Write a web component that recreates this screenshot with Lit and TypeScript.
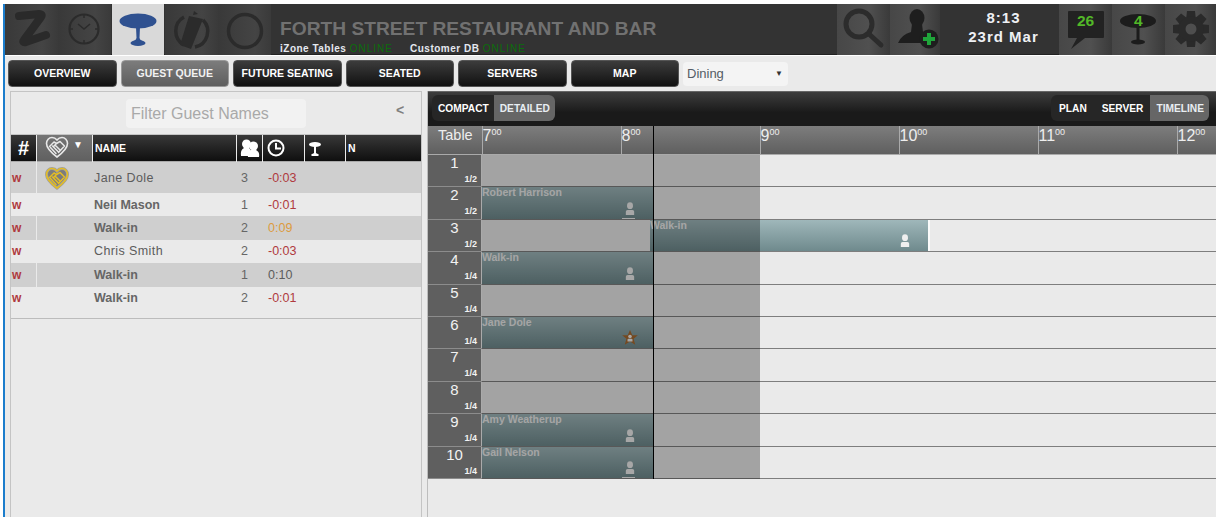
import { LitElement, html, svg, css, nothing } from "lit";
import { customElement } from "lit/decorators.js";

const NAV = ["OVERVIEW", "GUEST QUEUE", "FUTURE SEATING", "SEATED", "SERVERS", "MAP"];

const QUEUE = [
  { name: "Jane Dole", size: 3, wait: "-0:03", tone: "late", vip: true, dark: true },
  { name: "Neil Mason", size: 1, wait: "-0:01", tone: "late", bold: true },
  { name: "Walk-in", size: 2, wait: "0:09", tone: "warn", dark: true, bold: true },
  { name: "Chris Smith", size: 2, wait: "-0:03", tone: "late" },
  { name: "Walk-in", size: 1, wait: "0:10", tone: "", dark: true, bold: true },
  { name: "Walk-in", size: 2, wait: "-0:01", tone: "late", bold: true },
];

type Booking = { name: string; long?: boolean; star?: boolean; tail?: boolean };

const TABLES: { seats: string; booking?: Booking }[] = [
  { seats: "1/2" },
  { seats: "1/2", booking: { name: "Robert Harrison", tail: true } },
  { seats: "1/2", booking: { name: "Walk-in", long: true } },
  { seats: "1/4", booking: { name: "Walk-in" } },
  { seats: "1/4" },
  { seats: "1/4", booking: { name: "Jane Dole", star: true } },
  { seats: "1/4" },
  { seats: "1/4" },
  { seats: "1/4", booking: { name: "Amy Weatherup" } },
  { seats: "1/4", booking: { name: "Gail Nelson", tail: true } },
];

const HOURS = [7, 8, 9, 10, 11, 12];

const person = svg`<circle cx="6" cy="4" r="3.6"/><path d="M1 10.5Q1 8.5 3 8.5H9Q11 8.5 11 10.5V14H1Z"/>`;

const HEART_D =
  "M12 21C6 16.5 1.5 12.5 1.5 7.5C1.5 4 4 1.5 7 1.5C9 1.5 10.8 2.5 12 4C13.2 2.5 15 1.5 17 1.5C20 1.5 22.5 4 22.5 7.5C22.5 12.5 18 16.5 12 21Z";

const hands = (stroke: string) => svg`
  <path d="M4.5 10.5L9 6L11.5 7.5L15 5.5L19.5 10L13.5 16.5M5.5 11.5L11 17.5M7.5 10L13 15.5M10 9L15 14M11.5 7.5L8.5 10.5" fill="none" stroke=${stroke} stroke-width="1.5" stroke-linecap="round" stroke-linejoin="round"/>`;

const gearTeeth = [0, 45, 90, 135, 180, 225, 270, 315];

@customElement("app-root")
export class AppRoot extends LitElement {
  static styles = css`
    :host {
      display: block;
      width: 1216px;
      height: 520px;
      box-sizing: border-box;
      padding: 4px 0 3px 3px;
      background: #fff;
      font-family: "Liberation Sans", Arial, sans-serif;
      overflow: hidden;
    }

    .page {
      height: 513px;
      border-left: 2px solid #1b7dcc;
      background: #eaeaea;
      display: flex;
      flex-direction: column;
      overflow: hidden;
    }

    /* top bar */
    .topbar {
      flex: none;
      height: 51px;
      display: flex;
      background: #333;
      border-bottom: 1px solid #fff;
      box-shadow: inset 0 -1px 0 #222;
    }

    .tab {
      flex: none;
      width: 53px;
      position: relative;
      background: linear-gradient(90deg, #393939, #444 70%, #3a3a3a);
    }

    .tab svg {
      display: block;
    }

    .tab.active {
      background: #d9d9d9;
      width: 52px;
      margin: 0 1px 0 1px;
    }

    .tab.right {
      background: linear-gradient(90deg, #474747, #505050 60%, #3a3a3a);
    }

    .titles {
      flex: 1;
      padding: 13px 0 0 9px;
      min-width: 0;
    }

    .title {
      font-size: 19.2px;
      line-height: 24px;
      font-weight: bold;
      color: #717171;
      white-space: nowrap;
    }

    .status {
      display: flex;
      margin-top: 2px;
      font-size: 10px;
      line-height: 12px;
      font-weight: bold;
      color: #e4e8ef;
      letter-spacing: 0.5px;
      white-space: nowrap;
    }

    .status span {
      width: 130px;
    }

    .status b {
      font-weight: normal;
      color: #0b6f0b;
      letter-spacing: 1px;
    }

    .clock {
      flex: none;
      width: 119px;
      box-sizing: border-box;
      padding: 4px 0 0 8px;
      text-align: center;
      font-size: 15px;
      line-height: 19px;
      font-weight: bold;
      letter-spacing: 1px;
      color: #eef0f4;
    }

    .count {
      position: absolute;
      top: 8px;
      font-size: 15.5px;
      font-weight: bold;
      color: #52b828;
    }

    /* nav row */
    .nav {
      flex: none;
      height: 34px;
      display: flex;
      gap: 4px;
      padding: 4px 0 0 3px;
      box-sizing: border-box;
    }

    .nav button {
      flex: none;
      width: 108.5px;
      height: 27px;
      padding: 0 0 2px;
      border: 1px solid #555;
      border-radius: 4px;
      background: linear-gradient(#3c3c3c, #111);
      color: #fff;
      font: bold 10.5px "Liberation Sans", Arial, sans-serif;
    }

    .nav button.active {
      background: linear-gradient(#7c7c7c, #5e5e5e);
      border-color: #999;
      color: #f2f2f2;
    }

    .select {
      flex: none;
      width: 105px;
      height: 24px;
      margin-top: 2px;
      box-sizing: border-box;
      padding: 0 5px 2px 4px;
      display: flex;
      align-items: center;
      justify-content: space-between;
      background: #f4f4f4;
      border-radius: 4px;
      font-size: 13px;
      color: #555c66;
    }

    .select i {
      font-style: normal;
      font-size: 8px;
      color: #333;
    }

    /* main */
    .main {
      flex: 1;
      display: flex;
      min-height: 0;
      gap: 5px;
      padding-left: 5px;
    }

    .queue {
      flex: none;
      width: 410px;
      border: 1px solid #c4c4c4;
      border-bottom: none;
      box-sizing: content-box;
      margin-top: 1px;
    }

    .filter {
      height: 43px;
      display: flex;
      align-items: flex-start;
      position: relative;
      padding: 7px 0 0 115px;
      box-sizing: border-box;
      border-bottom: 1px solid #c4c4c4;
    }

    .filter div {
      width: 180px;
      height: 29px;
      box-sizing: border-box;
      padding-left: 5px;
      background: #f2f2f2;
      border-radius: 4px;
      font-size: 16px;
      line-height: 29px;
      color: #a9a9a9;
    }

    .filter span {
      position: absolute;
      left: 385px;
      top: 10px;
      font-size: 14px;
      font-weight: bold;
      color: #7f7f7f;
    }

    .qgrid {
      display: grid;
      grid-template-columns: 26px 56px 144px 26px 42px 41px 1fr;
    }

    .qh {
      height: 26px;
      margin-right: 1px;
      background: linear-gradient(#383838, #0f0f0f);
      color: #fff;
      font-size: 10px;
      font-weight: bold;
      display: flex;
      align-items: center;
      justify-content: center;
      border-bottom: 1px solid #aaa;
    }

    .qh.last {
      margin-right: 0;
    }

    .qh.heart {
      background: linear-gradient(#757575, #606060);
      justify-content: flex-start;
      padding-left: 8px;
      gap: 4px;
      align-items: flex-start;
      padding-top: 1px;
      height: 25px;
    }

    .qh.heart i {
      font-style: normal;
      font-size: 10px;
      margin-top: 3px;
    }

    .qh.text {
      justify-content: flex-start;
      padding-left: 2px;
      font-size: 10.5px;
    }

    .qh.hash {
      font-size: 20px;
    }

    .qh.icon-left {
      justify-content: flex-start;
      padding-left: 4px;
    }

    .qrow {
      display: contents;
    }

    .qrow > div {
      height: 23.4px;
      display: flex;
      align-items: center;
      font-size: 12.5px;
      color: #5c5c5c;
      background: #eaeaea;
    }

    .qrow.dark > div {
      background: #cfcfcf;
    }

    .qrow.tall > div {
      height: 31px;
    }

    .qrow .w {
      padding-left: 1px;
      font-weight: bold;
      color: #b03a3e;
      font-size: 12px;
      border-right: 1px solid #eaeaea;
    }

    .qrow .vip {
      padding-left: 7px;
    }

    .qrow .name {
      padding-left: 1px;
      letter-spacing: 0.4px;
    }

    .qrow.bold .name {
      font-weight: bold;
      letter-spacing: 0;
      color: #666;
    }

    .qrow .size {
      padding-left: 4px;
      color: #666;
    }

    .qrow .wait {
      padding-left: 5px;
    }

    .late {
      color: #b03a3e !important;
    }

    .warn {
      color: #dc9b40 !important;
    }

    .qend {
      grid-column: 1 / -1;
      height: 8px;
      border-bottom: 1px solid #bcbcbc;
    }

    /* timeline */
    .plan {
      flex: 1;
      min-width: 0;
      border-left: 1px solid #bdbdbd;
      margin-top: 1px;
    }

    .planbar {
      height: 35px;
      box-sizing: border-box;
      display: flex;
      justify-content: space-between;
      padding: 3px 7px 0 4px;
      background: linear-gradient(#3d3d3d, #1a1a1a 60%);
      border-top: 1px solid #666;
    }

    .seg {
      display: flex;
      height: 26px;
      border-radius: 6px;
      overflow: hidden;
      background: #262626;
      font-size: 10.2px;
      font-weight: bold;
      color: #fff;
    }

    .seg span {
      padding: 0 5px 0 6px;
      line-height: 28px;
    }

    .seg span.wide {
      padding: 0 7px 0 8px;
    }

    .seg span.on {
      background: #666;
      color: #e8edf2;
    }

    .chart {
      position: relative;
    }

    .hours {
      display: flex;
      height: 29px;
      background: linear-gradient(#7d7d7d, #5f5f5f);
      border-bottom: 1px solid #aaa;
      color: #eee;
      box-sizing: border-box;
    }

    .hours .lbl {
      flex: none;
      width: 53.5px;
      padding: 0 0 0 10px;
      box-sizing: border-box;
      font-size: 14.5px;
      line-height: 18px;
    }

    .hours .hr {
      flex: none;
      width: 139px;
      box-sizing: border-box;
      padding-top: 1px;
      border-left: 1px solid #aaa;
      font-size: 16px;
      line-height: 18px;
      white-space: nowrap;
    }

    .hours sup {
      font-size: 9px;
      line-height: 0;
      vertical-align: 6px;
    }

    .trow {
      display: flex;
      height: 32.4px;
      box-sizing: border-box;
    }

    .tnum {
      flex: none;
      width: 53px;
      background: #5f5f5f;
      border-bottom: 1px solid #8c8c8c;
      box-sizing: border-box;
      display: flex;
      flex-direction: column;
      color: #f2f2f2;
    }

    .tnum b {
      font-weight: normal;
      text-align: center;
      font-size: 15px;
      line-height: 16px;
    }

    .tnum i {
      font-style: normal;
      font-weight: bold;
      font-size: 9px;
      line-height: 11px;
      text-align: right;
      padding-right: 4px;
      padding-top: 3px;
    }

    .lane {
      flex: 1;
      position: relative;
      background: #eaeaea;
      border-left: 1px solid #f4f4f4;
      border-bottom: 1px solid #7e7e7e;
    }

    .booking {
      position: absolute;
      left: 0;
      top: 0;
      bottom: 0;
      width: 171px;
      background: linear-gradient(#9fb7ba, #6f8a8d);
      color: #ededed;
      font-size: 10.5px;
      font-weight: bold;
      line-height: 10px;
      padding: 0;
      box-sizing: border-box;
    }

    .booking.long {
      left: 168px;
      width: 280px;
      border-right: 2px solid #fbfbfb;
    }

    .booking svg {
      position: absolute;
      right: 18px;
      bottom: 4px;
      fill: #efefef;
    }

    .booking svg.star {
      fill: #a8692e;
      right: 15px;
      bottom: 3px;
    }

    .booking svg.small {
      right: 20px;
      bottom: 6px;
    }

    .tail {
      position: absolute;
      right: 18px;
      bottom: 0;
      width: 13px;
      height: 1px;
      background: #efefef;
    }

    .shade {
      position: absolute;
      left: 53px;
      top: 0;
      bottom: 0;
      width: 279px;
      background: rgba(0, 0, 0, 0.3);
      pointer-events: none;
    }

    .now {
      position: absolute;
      left: 225px;
      top: 0;
      bottom: 0;
      width: 1px;
      background: #000;
    }

    .shade-wrap {
      position: absolute;
      left: 0;
      right: 0;
      top: 29px;
      bottom: 0;
    }
  `;

  private renderBooking(b: Booking) {
    return html`<div class="booking ${b.long ? "long" : ""}">
      ${b.name}
      ${b.star
        ? html`<svg class="star" width="16" height="15" viewBox="0 0 24 23"><path d="M12 0L15.5 8H24L17.5 13.5L20 22.5L12 17.5L4 22.5L6.5 13.5L0 8H8.5Z"/></svg>
            <svg class="small" width="6" height="8" viewBox="0 0 12 14">${person}</svg>`
        : html`<svg width="10" height="13" viewBox="0 0 12 14" preserveAspectRatio="none">${person}</svg>`}
      ${b.tail ? html`<div class="tail"></div>` : nothing}
    </div>`;
  }

  render() {
    return html`
      <div class="page">
        <div class="topbar">
          <div class="tab">
            <svg width="53" height="50" viewBox="0 0 53 50"><path d="M14 12L34 10Q38 10 36 13L19 36Q17 39 21 38L41 31" fill="none" stroke="#2a2a2a" stroke-width="8" stroke-linecap="round" stroke-linejoin="round"/></svg>
          </div>
          <div class="tab">
            <svg width="53" height="50" viewBox="0 0 53 50" fill="none" stroke="#2b2b2b"><circle cx="26" cy="25" r="14.5" stroke-width="2.2"/><path d="M20 20L26 25L32 20M26 11V14M26 36V39M12 25H15M37 25H40" stroke-width="1.5"/></svg>
          </div>
          <div class="tab active">
            <svg width="52" height="50" viewBox="0 0 52 50" fill="#2f5190"><ellipse cx="26" cy="17" rx="18.5" ry="7.5"/><path d="M24 23H28L27.5 34Q28 36 30 37H22Q24 36 24.5 34Z"/><ellipse cx="26" cy="39" rx="7.5" ry="3"/></svg>
          </div>
          <div class="tab">
            <svg width="53" height="50" viewBox="0 0 53 50" fill="#2b2b2b"><path d="M19 13A16 16 0 0 0 19 41M38 16A16 16 0 0 1 30 43" fill="none" stroke="#2b2b2b" stroke-width="3.5"/><path d="M24 12L38 15L26 45L15 41Z"/><path d="M29 7L33 10L28 11Z"/></svg>
          </div>
          <div class="tab">
            <svg width="53" height="50" viewBox="0 0 53 50"><circle cx="27" cy="27" r="16.5" fill="none" stroke="#2b2b2b" stroke-width="3.5"/></svg>
          </div>
          <div class="titles">
            <div class="title">FORTH STREET RESTAURANT AND BAR</div>
            <div class="status"><span>iZone Tables <b>ONLINE</b></span><span>Customer DB <b>ONLINE</b></span></div>
          </div>
          <div class="tab right">
            <svg width="53" height="50" viewBox="0 0 53 50" fill="none" stroke="#2c2c2c"><circle cx="22" cy="20" r="13" stroke-width="5"/><path d="M32 30L44 41" stroke-width="5" stroke-linecap="round"/></svg>
          </div>
          <div class="tab right" style="width:50px">
            <svg width="50" height="50" viewBox="0 0 50 50" fill="#1e1e1e"><ellipse cx="27" cy="14" rx="7.5" ry="9"/><path d="M22 20H32L33 28Q35 30 36 32L34 39H8Q11 31 21 28Z"/><circle cx="39" cy="35" r="9.5"/><path d="M37 29H41V33H45V37H41V41H37V37H33V33H37Z" fill="#1fa53a"/></svg>
          </div>
          <div class="clock">8:13<br />23rd Mar</div>
          <div class="tab right">
            <svg width="53" height="50" viewBox="0 0 53 50"><path d="M10 7H44Q45 7 45 8V33Q45 34 44 34H26L12 45L18 34H10Q9 34 9 33V8Q9 7 10 7Z" fill="#222"/></svg>
            <span class="count" style="left:18px">26</span>
          </div>
          <div class="tab right">
            <svg width="53" height="50" viewBox="0 0 53 50" fill="#1c1c1c"><ellipse cx="26" cy="17" rx="18" ry="7"/><path d="M24.5 22H27.5V36H24.5Z"/><ellipse cx="26" cy="38" rx="7" ry="2.5"/></svg>
            <span class="count" style="left:22px">4</span>
          </div>
          <div class="tab right" style="width:51px">
            <svg width="51" height="50" viewBox="0 0 51 50" fill="#2a2a2a">
              ${gearTeeth.map((a) => svg`<path d="M22 7H30L31 16H21Z" transform="rotate(${a} 26 25)"/>`)}
              <circle cx="26" cy="25" r="12.5"/><circle cx="26" cy="25" r="5.5" fill="#4e4e4e"/>
            </svg>
          </div>
        </div>

        <div class="nav">
          ${NAV.map((n) => html`<button class=${n === "GUEST QUEUE" ? "active" : ""}>${n}</button>`)}
          <div class="select">Dining <i>▼</i></div>
        </div>

        <div class="main">
          <div class="queue">
            <div class="filter"><div>Filter Guest Names</div><span>&lt;</span></div>
            <div class="qgrid">
              <div class="qh hash">#</div>
              <div class="qh heart"><svg width="24" height="22" viewBox="0 0 24 22"><path d=${HEART_D} fill="none" stroke="#e8e8e8" stroke-width="1.6"/>${hands("#e8e8e8")}</svg><i>▼</i></div>
              <div class="qh text">NAME</div>
              <div class="qh">
                <svg width="20" height="18" viewBox="0 0 20 18" fill="#fff"><circle cx="6.5" cy="5" r="4.5"/><path d="M1 17Q0 11 4 9H9Q12 11 11 17Z"/><circle cx="13.5" cy="7" r="4.5"/><path d="M8 18Q7 13 11 11H16Q20 13 19 18Z"/></svg>
              </div>
              <div class="qh icon-left">
                <svg width="18" height="18" viewBox="0 0 18 18" fill="none" stroke="#fff" stroke-width="2"><circle cx="9" cy="9" r="7.5"/><path d="M9 4V9.5H14"/></svg>
              </div>
              <div class="qh icon-left">
                <svg width="12" height="15" viewBox="0 0 12 15" fill="#fff"><ellipse cx="6" cy="3.5" rx="6" ry="2.5"/><path d="M5 5H7V12Q8 13 9.5 13V15H2.5V13Q4 13 5 12Z"/></svg>
              </div>
              <div class="qh text last">N</div>
              ${QUEUE.map(
                (r) => html`<div class="qrow ${r.dark ? "dark" : ""} ${r.bold ? "bold" : ""} ${r.vip ? "tall" : ""}">
                  <div class="w">w</div>
                  <div class="vip">
                    ${r.vip
                      ? html`<svg width="26" height="24" viewBox="-1 -1 26 24"><path d=${HEART_D} fill="#7c7c7c" stroke="#9e9e9e" stroke-width="3"/><path d=${HEART_D} fill="none" stroke="#e3bd25" stroke-width="1.6"/>${hands("#e3bd25")}</svg>`
                      : nothing}
                  </div>
                  <div class="name">${r.name}</div>
                  <div class="size">${r.size}</div>
                  <div class="wait ${r.tone}">${r.wait}</div>
                  <div></div>
                  <div></div>
                </div>`
              )}
              <div class="qend"></div>
            </div>
          </div>

          <div class="plan">
            <div class="planbar">
              <div class="seg"><span>COMPACT</span><span class="on">DETAILED</span></div>
              <div class="seg"><span class="wide">PLAN</span><span class="wide">SERVER</span><span class="on">TIMELINE</span></div>
            </div>
            <div class="chart">
              <div class="hours">
                <div class="lbl">Table</div>
                ${HOURS.map((h) => html`<div class="hr">${h}<sup>00</sup></div>`)}
              </div>
              ${TABLES.map(
                (t, i) => html`<div class="trow">
                  <div class="tnum"><b>${i + 1}</b><i>${t.seats}</i></div>
                  <div class="lane">${t.booking ? this.renderBooking(t.booking) : nothing}</div>
                </div>`
              )}
              <div class="shade-wrap"><div class="shade"></div></div>
              <div class="now"></div>
            </div>
          </div>
        </div>
      </div>
    `;
  }
}

declare global {
  interface HTMLElementTagNameMap {
    "app-root": AppRoot;
  }
}
